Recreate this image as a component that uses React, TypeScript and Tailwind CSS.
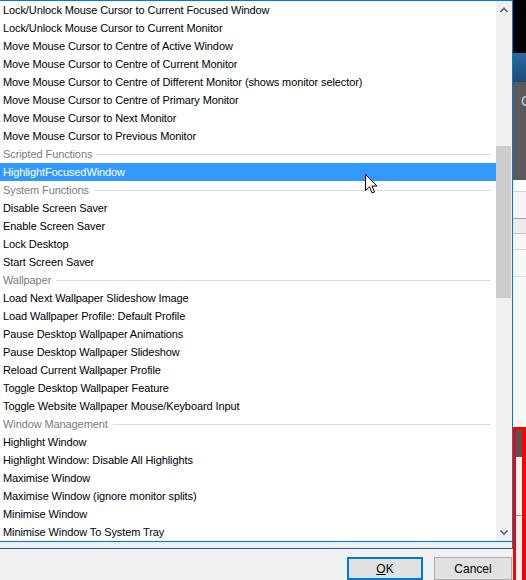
import React from "react";

type Row = { t: string; h?: boolean; sel?: boolean };

const rows: Row[] = [
  { t: "Lock/Unlock Mouse Cursor to Current Focused Window" },
  { t: "Lock/Unlock Mouse Cursor to Current Monitor" },
  { t: "Move Mouse Cursor to Centre of Active Window" },
  { t: "Move Mouse Cursor to Centre of Current Monitor" },
  { t: "Move Mouse Cursor to Centre of Different Monitor (shows monitor selector)" },
  { t: "Move Mouse Cursor to Centre of Primary Monitor" },
  { t: "Move Mouse Cursor to Next Monitor" },
  { t: "Move Mouse Cursor to Previous Monitor" },
  { t: "Scripted Functions", h: true },
  { t: "HighlightFocusedWindow", sel: true },
  { t: "System Functions", h: true },
  { t: "Disable Screen Saver" },
  { t: "Enable Screen Saver" },
  { t: "Lock Desktop" },
  { t: "Start Screen Saver" },
  { t: "Wallpaper", h: true },
  { t: "Load Next Wallpaper Slideshow Image" },
  { t: "Load Wallpaper Profile: Default Profile" },
  { t: "Pause Desktop Wallpaper Animations" },
  { t: "Pause Desktop Wallpaper Slideshow" },
  { t: "Reload Current Wallpaper Profile" },
  { t: "Toggle Desktop Wallpaper Feature" },
  { t: "Toggle Website Wallpaper Mouse/Keyboard Input" },
  { t: "Window Management", h: true },
  { t: "Highlight Window" },
  { t: "Highlight Window: Disable All Highlights" },
  { t: "Maximise Window" },
  { t: "Maximise Window (ignore monitor splits)" },
  { t: "Minimise Window" },
  { t: "Minimise Window To System Tray" },
];

const font = { fontFamily: '"Liberation Sans", Arial, sans-serif' };

function Chevron({ up }: { up?: boolean }) {
  return (
    <svg width="16" height="16" viewBox="0 0 16 16">
      <path
        d={up ? "M4.5 10 L8 6.5 L11.5 10" : "M4.5 6.5 L8 10 L11.5 6.5"}
        fill="none"
        stroke="#606060"
        strokeWidth="1.6"
      />
    </svg>
  );
}

export default function App() {
  return (
    <div
      className="relative w-[526px] h-[580px] overflow-hidden bg-[#f0f0f0] flex text-[11px] text-black"
      style={font}
    >
      {/* left column */}
      <div className="w-[513px] flex flex-col">
        {/* dropdown list */}
        <div className="h-[542px] border-t border-r border-b border-[#0078d7] bg-white flex">
          <div className="w-[496px] flex flex-col pt-0">
            {rows.map((r, i) =>
              r.h ? (
                <div key={i} className="h-[18px] flex items-center pl-[3px] text-[#7c7c7c] tracking-[-0.1px]">
                  <span className="leading-[18px] whitespace-nowrap">{r.t}</span>
                  <div className="flex-1 h-px bg-[#dedede] ml-[5px] mr-[5px]" />
                </div>
              ) : (
                <div
                  key={i}
                  className={
                    "h-[18px] leading-[18px] pl-[3px] whitespace-nowrap tracking-[-0.1px] " +
                    (r.sel ? "bg-[#3399ff] text-white" : "")
                  }
                >
                  {r.t}
                </div>
              )
            )}
          </div>
          {/* scrollbar */}
          <div className="w-[16px] bg-[#f0f0f0] flex flex-col">
            <div className="h-[17px] flex items-start justify-center pt-[1px]">
              <Chevron up />
            </div>
            <div className="flex-1 flex flex-col">
              <div className="h-[128px]" />
              <div className="h-[152px] w-[15px] bg-[#cdcdcd]" />
              <div className="flex-1" />
            </div>
            <div className="h-[17px] flex items-end justify-center pb-[1px]">
              <Chevron />
            </div>
          </div>
        </div>
        {/* shadow strip of underlying combo */}
        <div className="h-[6px] bg-[#eceff2] border-r border-[#0078d7]" />
        <div className="h-px bg-[#2b5d9a]" />
        {/* button bar */}
        <div className="flex-1 flex justify-end items-start pt-[8px] pr-[1px] gap-[11px]">
          <div className="w-[76px] h-[23px] border-2 border-[#0078d7] bg-[#e1e1e1] flex items-center justify-center text-[12px]">
            <span>
              <span className="underline">O</span>K
            </span>
          </div>
          <div className="w-[78px] h-[23px] border border-[#adadad] bg-[#e1e1e1] flex items-center justify-center text-[12px]">
            Cancel
          </div>
        </div>
      </div>
      {/* right background strip */}
      <div className="w-[13px] flex flex-col">
        <div className="h-[53px] bg-black" />
        <div className="h-[29px] bg-gradient-to-b from-[#2e6aa3] to-[#1d4a75]" />
        <div className="h-[98px] bg-[#5a5a5a] flex pt-[12px] pl-[8px] text-[14px] text-[#cfcfcf] leading-none">
          C
        </div>
        <div className="h-[247px] flex flex-col bg-[#f7f7f7]">
          <div className="h-[11px] bg-[#fcfcfc]" />
          <div className="h-px bg-[#d0d0d0]" />
          <div className="h-[26px] bg-[#f5f5f5]" />
          <div className="h-px bg-[#a8a8a8]" />
          <div className="h-[14px] bg-[#ececec]" />
          <div className="h-px bg-[#c8c8c8]" />
          <div className="h-[15px] bg-[#f6f6f6]" />
          <div className="h-px bg-[#d8d8d8]" />
          <div className="h-[26px] bg-[#f8f8f8]" />
          <div className="h-px bg-[#e2e2e2]" />
          <div className="flex-1 bg-[#f8f8f8]" />
        </div>
        <div className="flex-1 border-t-[3px] border-l-[3px] border-r-[4px] border-[#ff0000] flex flex-col">
          <div className="h-[27px] bg-[#555555]" />
          <div className="h-[58px] bg-[#f4f4f4]" />
          <div className="h-px bg-[#9a9a9a]" />
          <div className="flex-1 bg-[#f0f0f0]" />
        </div>
      </div>
      {/* mouse cursor overlay */}
      <svg
        className="absolute left-[365px] top-[174px]"
        width="13"
        height="20"
        viewBox="0 0 13 20"
      >
        <path
          d="M0.5 0.5 L0.5 16.5 L4.5 12.8 L7.2 19 L9.6 18 L7 12 L12 12 Z"
          fill="#ffffff"
          stroke="#000000"
          strokeWidth="1"
          strokeLinejoin="miter"
        />
      </svg>
    </div>
  );
}
